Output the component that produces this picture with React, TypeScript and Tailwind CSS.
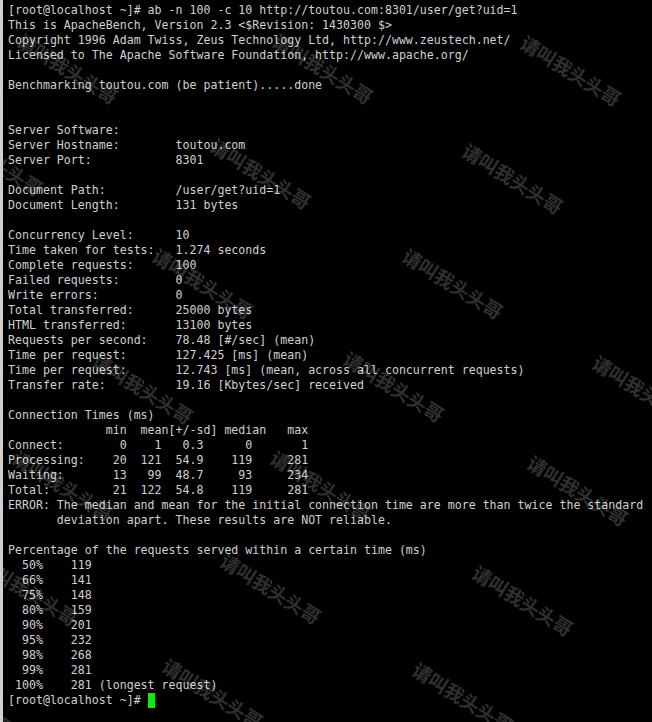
const lines = [
  "[root@localhost ~]# ab -n 100 -c 10 http://toutou.com:8301/user/get?uid=1",
  "This is ApacheBench, Version 2.3 <$Revision: 1430300 $>",
  "Copyright 1996 Adam Twiss, Zeus Technology Ltd, http://www.zeustech.net/",
  "Licensed to The Apache Software Foundation, http://www.apache.org/",
  "",
  "Benchmarking toutou.com (be patient).....done",
  "",
  "",
  "Server Software:",
  "Server Hostname:        toutou.com",
  "Server Port:            8301",
  "",
  "Document Path:          /user/get?uid=1",
  "Document Length:        131 bytes",
  "",
  "Concurrency Level:      10",
  "Time taken for tests:   1.274 seconds",
  "Complete requests:      100",
  "Failed requests:        0",
  "Write errors:           0",
  "Total transferred:      25000 bytes",
  "HTML transferred:       13100 bytes",
  "Requests per second:    78.48 [#/sec] (mean)",
  "Time per request:       127.425 [ms] (mean)",
  "Time per request:       12.743 [ms] (mean, across all concurrent requests)",
  "Transfer rate:          19.16 [Kbytes/sec] received",
  "",
  "Connection Times (ms)",
  "              min  mean[+/-sd] median   max",
  "Connect:        0    1   0.3      0       1",
  "Processing:    20  121  54.9    119     281",
  "Waiting:       13   99  48.7     93     234",
  "Total:         21  122  54.8    119     281",
  "ERROR: The median and mean for the initial connection time are more than twice the standard",
  "       deviation apart. These results are NOT reliable.",
  "",
  "Percentage of the requests served within a certain time (ms)",
  "  50%    119",
  "  66%    141",
  "  75%    148",
  "  80%    159",
  "  90%    201",
  "  95%    232",
  "  98%    268",
  "  99%    281",
  " 100%    281 (longest request)",
];

// watermark centres, read off the screenshot
const marks = [
  [65, 68], [320, 68], [568, 70],
  [-10, 160], [258, 173], [510, 178],
  [200, 283], [450, 283], [700, 290],
  [140, 388], [391, 386], [640, 390],
  [60, 485], [318, 485], [575, 490],
  [25, 590], [268, 588], [520, 600],
  [-40, 700], [210, 693], [460, 697],
];

export default function App() {
  return (
    <div className="relative w-[652px] h-[722px] overflow-hidden bg-black border-l-[3px] border-[#cfcfcf]">
      <pre className="pt-[3px] pl-[5px] font-['DejaVu_Sans_Mono',monospace] text-[11.6px] leading-[15px] text-[#d0d0d0] whitespace-pre">
        {lines.map((line, i) => (
          <div key={i} className="h-[15px]">
            {line}
          </div>
        ))}
        <div className="h-[15px]">
          [root@localhost ~]#{" "}
          <span className="inline-block w-[7px] h-[15px] align-top bg-[#12e812]" />
        </div>
      </pre>

      {/* watermark overlay */}
      {marks.map(([x, y], i) => (
        <div
          key={i}
          className="absolute pointer-events-none whitespace-nowrap font-['Noto_Sans_CJK_SC',sans-serif] font-bold text-[19px] leading-none text-white/20 -translate-x-1/2 -translate-y-1/2 rotate-[32deg]"
          style={{ left: x, top: y }}
        >
          请叫我头头哥
        </div>
      ))}
    </div>
  );
}
